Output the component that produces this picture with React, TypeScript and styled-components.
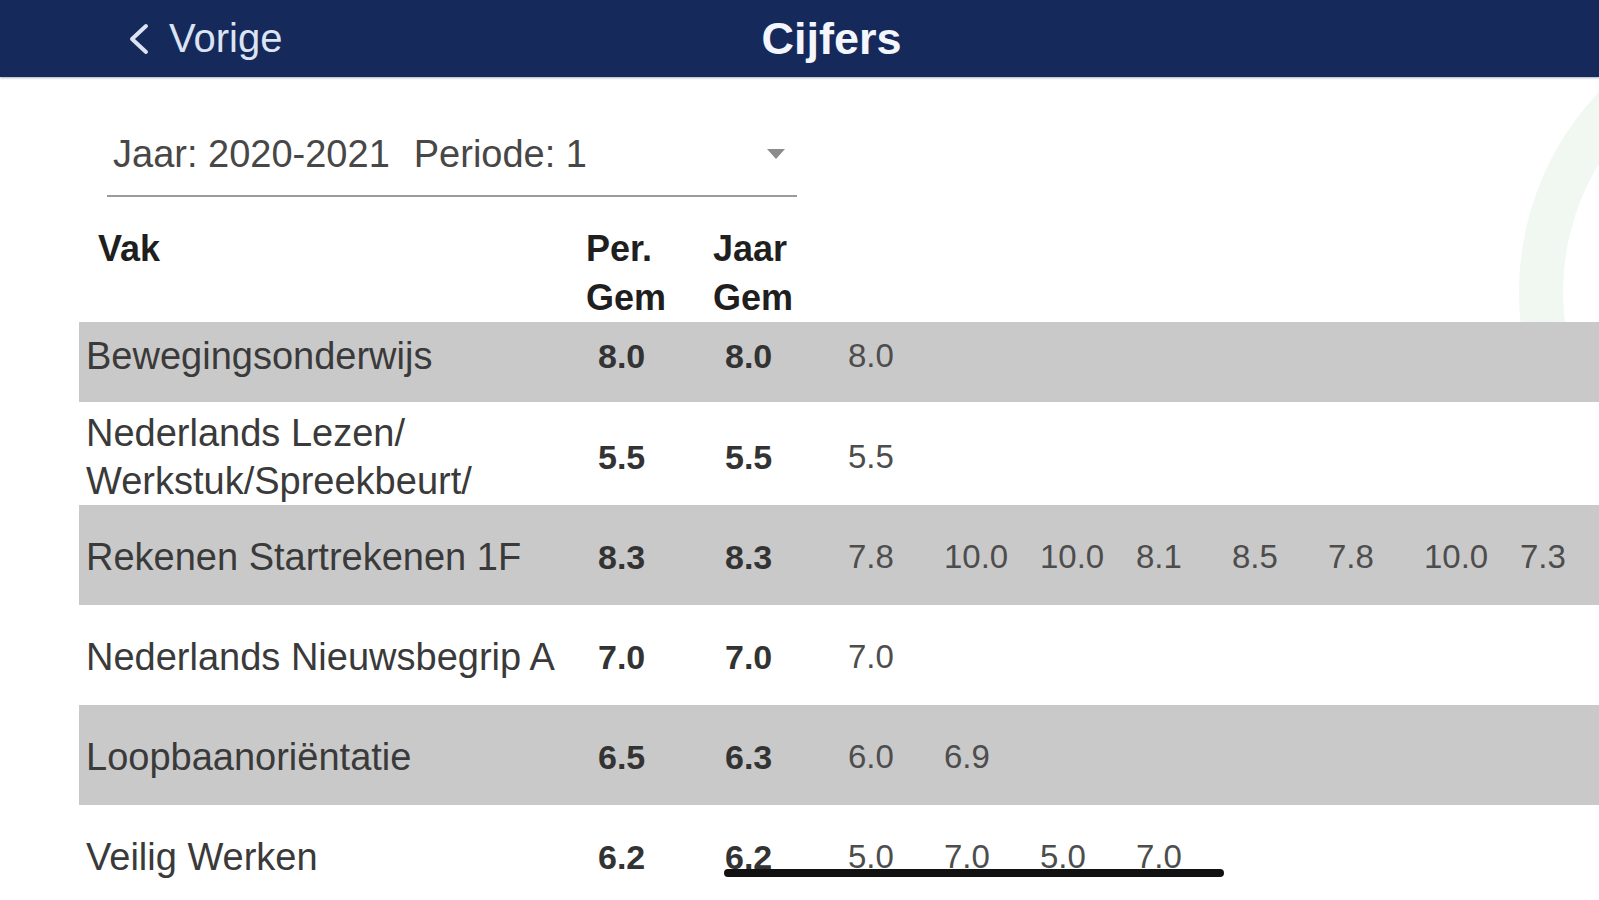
import styled, { createGlobalStyle } from "styled-components";

const GlobalStyle = createGlobalStyle`
  html, body {
    margin: 0;
    padding: 0;
    overflow: hidden;
    background: #ffffff;
    font-family: "Liberation Sans", Arial, Helvetica, sans-serif;
  }
  * {
    box-sizing: border-box;
  }
`;

const Page = styled.div`
  width: 1599px;
  height: 900px;
  display: flex;
  flex-direction: column;
  overflow: hidden;
`;

const NavBar = styled.header`
  height: 77px;
  flex-shrink: 0;
  background: #15295b;
  display: grid;
  grid-template-columns: 1fr auto 1fr;
  align-items: center;
  padding-left: 64px;
  box-shadow: 0 1px 2px rgba(20, 30, 60, 0.35);
  position: relative;
  z-index: 1;
`;

const BackButton = styled.a`
  justify-self: start;
  margin-left: 63px;
  display: flex;
  align-items: center;
  gap: 18px;
  color: #dce3f3;
  font-size: 40px;
  text-decoration: none;
  cursor: pointer;
`;

const Title = styled.h1`
  margin: 0;
  font-size: 45px;
  font-weight: 700;
  color: #f3f6fc;
`;

const Content = styled.main`
  position: relative;
  isolation: isolate;
  flex: 1;
`;

const Watermark = styled.svg`
  position: absolute;
  top: 0;
  right: 0;
  z-index: -1;
`;

const Filter = styled.div`
  padding: 36px 0 0 107px;
`;

const Select = styled.div`
  width: 690px;
  height: 84px;
  display: flex;
  align-items: center;
  gap: 24px;
  padding: 0 12px 0 6px;
  border-bottom: 2px solid #9b9b9b;
  font-size: 38px;
  color: #474747;
`;

const Caret = styled.span`
  margin-left: auto;
  width: 0;
  height: 0;
  border-left: 9px solid transparent;
  border-right: 9px solid transparent;
  border-top: 10px solid #8c8c8c;
`;

const Table = styled.section`
  margin: 27px 0 0 79px;
`;

const GridRow = styled.div<{ $shaded?: boolean; $top?: number; $bottom?: number }>`
  display: grid;
  grid-template-columns: 507px 127px 123px repeat(7, 96px) 1fr;
  align-items: center;
  padding-top: ${(p) => p.$top ?? 0}px;
  padding-bottom: ${(p) => p.$bottom ?? 0}px;
  background: ${(p) => (p.$shaded ? "#c9c9c9" : "#ffffff")};
`;

const HeadRow = styled(GridRow)`
  align-items: start;
  background: transparent;
`;

const HeadCell = styled.div<{ $indent?: number }>`
  padding-left: ${(p) => p.$indent ?? 0}px;
  font-size: 36px;
  font-weight: 700;
  line-height: 49px;
  color: #1f1f1f;
`;

const Subject = styled.div`
  padding-left: 7px;
  font-size: 38px;
  line-height: 48px;
  color: #3a3a3a;
  white-space: nowrap;
`;

const Grade = styled.div<{ $average?: boolean }>`
  padding-left: 12px;
  font-size: ${(p) => (p.$average ? 34 : 33)}px;
  font-weight: ${(p) => (p.$average ? 700 : 400)};
  color: ${(p) => (p.$average ? "#333333" : "#4d4d4d")};
  white-space: nowrap;
`;

const ScrollIndicator = styled.div`
  position: absolute;
  top: 792px;
  left: 724px;
  width: 500px;
  height: 8px;
  border-radius: 4px;
  background: #111111;
`;

type SubjectRow = {
  name: string[];
  per: string;
  jaar: string;
  grades: string[];
  shaded: boolean;
  top: number;
  bottom: number;
};

const rows: SubjectRow[] = [
  { name: ["Bewegingsonderwijs"], per: "8.0", jaar: "8.0", grades: ["8.0"], shaded: true, top: 10, bottom: 22 },
  {
    name: ["Nederlands Lezen/", "Werkstuk/Spreekbeurt/"],
    per: "5.5",
    jaar: "5.5",
    grades: ["5.5"],
    shaded: false,
    top: 7,
    bottom: 0,
  },
  {
    name: ["Rekenen Startrekenen 1F"],
    per: "8.3",
    jaar: "8.3",
    grades: ["7.8", "10.0", "10.0", "8.1", "8.5", "7.8", "10.0", "7.3"],
    shaded: true,
    top: 28,
    bottom: 24,
  },
  { name: ["Nederlands Nieuwsbegrip A"], per: "7.0", jaar: "7.0", grades: ["7.0"], shaded: false, top: 28, bottom: 24 },
  { name: ["Loopbaanoriëntatie"], per: "6.5", jaar: "6.3", grades: ["6.0", "6.9"], shaded: true, top: 28, bottom: 24 },
  {
    name: ["Veilig Werken"],
    per: "6.2",
    jaar: "6.2",
    grades: ["5.0", "7.0", "5.0", "7.0"],
    shaded: false,
    top: 28,
    bottom: 24,
  },
];

const App = () => {
  return (
    <Page>
      <GlobalStyle />
      <NavBar>
        <BackButton>
          <svg width="24" height="32" viewBox="0 0 24 32" fill="none">
            <path d="M19 3 L5 16 L19 29" stroke="currentColor" strokeWidth="4" strokeLinecap="round" strokeLinejoin="round" />
          </svg>
          Vorige
        </BackButton>
        <Title>Cijfers</Title>
      </NavBar>
      <Content>
        <Watermark width="120" height="250" viewBox="0 0 120 250">
          <circle cx="330" cy="215" r="268" fill="none" stroke="#f1f7f1" strokeWidth="44" />
        </Watermark>
        <Filter>
          <Select>
            <span>Jaar: 2020-2021</span>
            <span>Periode: 1</span>
            <Caret />
          </Select>
        </Filter>
        <Table>
          <HeadRow>
            <HeadCell $indent={19}>Vak</HeadCell>
            <HeadCell>
              Per.
              <br />
              Gem
            </HeadCell>
            <HeadCell>
              Jaar
              <br />
              Gem
            </HeadCell>
          </HeadRow>
          {rows.map((row) => (
            <GridRow key={row.name.join("")} $shaded={row.shaded} $top={row.top} $bottom={row.bottom}>
              <Subject>
                {row.name.map((line, i) => (
                  <div key={i}>{line}</div>
                ))}
              </Subject>
              <Grade $average>{row.per}</Grade>
              <Grade $average>{row.jaar}</Grade>
              {row.grades.map((g, i) => (
                <Grade key={i}>{g}</Grade>
              ))}
            </GridRow>
          ))}
        </Table>
        <ScrollIndicator />
      </Content>
    </Page>
  );
};

export default App;
